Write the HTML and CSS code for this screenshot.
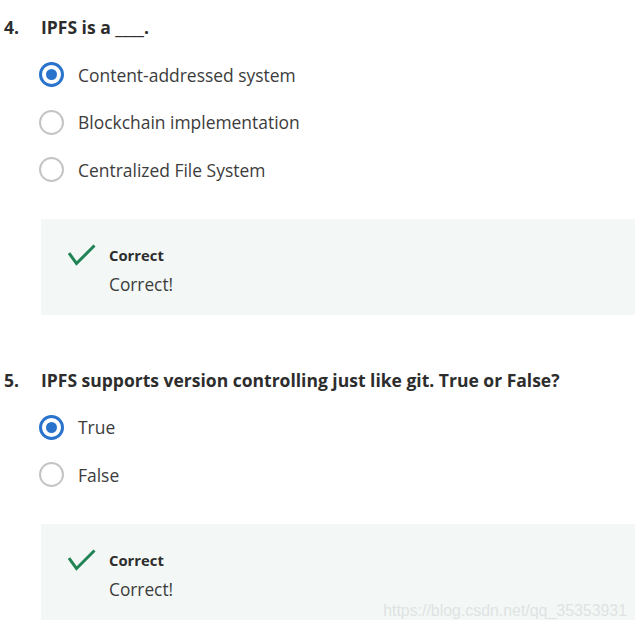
FILE: index.html
```html
<!DOCTYPE html>
<html lang="en">
<head>
<meta charset="utf-8">
<link rel="stylesheet" href="styles.css">
</head>
<body>
<div class="quiz">
  <section class="question">
    <div class="q-head"><span class="q-num">4.</span><span class="q-text">IPFS is a ____.</span></div>
    <ul class="options">
      <li class="option"><span class="radio checked"></span><span>Content-addressed system</span></li>
      <li class="option"><span class="radio"></span><span>Blockchain implementation</span></li>
      <li class="option"><span class="radio"></span><span>Centralized File System</span></li>
    </ul>
    <div class="feedback">
      <svg class="check" width="28" height="22" viewBox="0 0 28 22"><polyline points="1,9 8.5,19.5 26.5,1.5" fill="none" stroke="#1f8354" stroke-width="3"/></svg>
      <div class="fb-text">
        <div class="fb-title">Correct</div>
        <div class="fb-body">Correct!</div>
      </div>
    </div>
  </section>
  <section class="question second">
    <div class="q-head"><span class="q-num">5.</span><span class="q-text">IPFS supports version controlling just like git. True or False?</span></div>
    <ul class="options">
      <li class="option"><span class="radio checked"></span><span>True</span></li>
      <li class="option"><span class="radio"></span><span>False</span></li>
    </ul>
    <div class="feedback">
      <svg class="check" width="28" height="22" viewBox="0 0 28 22"><polyline points="1,9 8.5,19.5 26.5,1.5" fill="none" stroke="#1f8354" stroke-width="3"/></svg>
      <div class="fb-text">
        <div class="fb-title">Correct</div>
        <div class="fb-body">Correct!</div>
      </div>
      <span class="watermark">https://blog.csdn.net/qq_35353931</span>
    </div>
  </section>
</div>
</body>
</html>
```
FILE: styles.css
```css
html, body {
  margin: 0;
  padding: 0;
  background: #ffffff;
}
body {
  font-family: "Open Sans", "DejaVu Sans", sans-serif;
  color: #333333;
  overflow: hidden;
}
.quiz {
  padding-top: 15px;
}
.question.second {
  margin-top: 53px;
}
.q-head {
  display: flex;
  font-size: 17.5px;
  line-height: 24px;
  font-weight: 700;
  color: #2d2d2d;
  padding-left: 4px;
}
.q-num {
  width: 37px;
  flex: none;
}
.options {
  list-style: none;
  margin: 12px 0 0 39px;
  padding: 0;
}
.option {
  display: flex;
  align-items: center;
  height: 47.5px;
  gap: 14px;
  font-size: 17.45px;
  color: #3c3c3c;
}
.radio {
  flex: none;
  box-sizing: border-box;
  width: 25px;
  height: 25px;
  border-radius: 50%;
  border: 2px solid #c4c4c4;
  display: flex;
  align-items: center;
  justify-content: center;
}
.radio.checked {
  border: 3px solid #2a73cc;
}
.radio.checked::after {
  content: "";
  width: 11px;
  height: 11px;
  border-radius: 50%;
  background: #2a73cc;
}
.feedback {
  position: relative;
  margin: 25px 0 0 41px;
  height: 96px;
  box-sizing: border-box;
  padding: 26px 0 0 27px;
  background: #f3f8f6;
  display: flex;
  gap: 13px;
}
.check {
  flex: none;
  margin-top: -1px;
}
.fb-title {
  font-size: 14.8px;
  line-height: 20px;
  font-weight: 700;
  color: #2d2d2d;
}
.fb-body {
  margin-top: 8px;
  font-size: 17.3px;
  line-height: 24px;
  color: #3c3c3c;
}
.watermark {
  position: absolute;
  right: 8px;
  bottom: 0;
  font-family: "Liberation Sans", Arial, sans-serif;
  font-size: 15.9px;
  color: #dfe3e3;
}
```
